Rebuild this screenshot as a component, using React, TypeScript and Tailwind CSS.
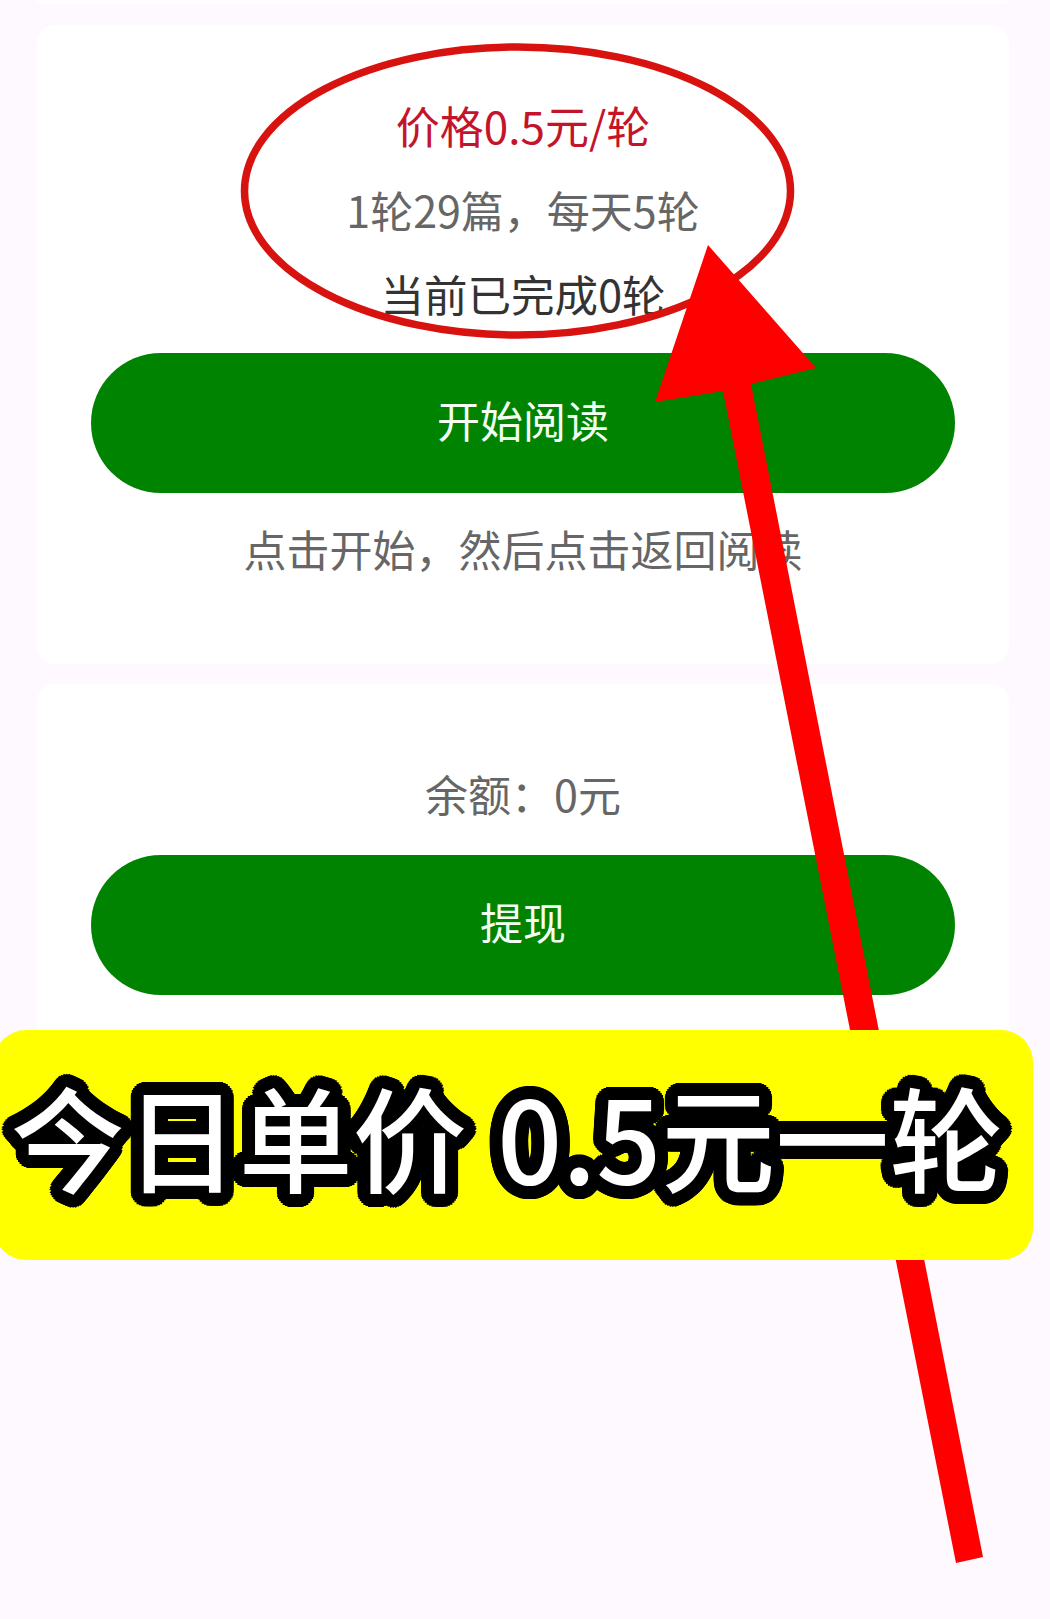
export default function App() {
  const font = 'font-["Noto_Sans_CJK_SC",sans-serif]';
  return (
    <div className={`relative w-[1050px] h-[1619px] overflow-hidden bg-[#fdf9fe] ${font}`}>
      <div className="mx-[37px] w-[972px] h-[4px] rounded-b-[18px] bg-[#fffdff]" />
      <section className="mt-[21px] mx-[37px] w-[972px] h-[639px] rounded-[18px] bg-white flex flex-col items-center pt-[58px]">
        <p className="text-[44px] leading-[84px] text-[#c4142a]">价格0.5元/轮</p>
        <p className="text-[43px] leading-[84px] text-[#666666]">1轮29篇，每天5轮</p>
        <p className="mt-[1px] text-[43.5px] leading-[83px] text-[#333333]">当前已完成0轮</p>
        <button className="mt-[18px] w-[864px] h-[140px] rounded-[70px] bg-[#008300] pb-[8px] text-[43px] text-[#f2fff2]">开始阅读</button>
        <p className="mt-[13px] text-[43px] leading-[84px] text-[#666666]">点击开始，然后点击返回阅读</p>
      </section>
      <section className="mt-[20px] mx-[37px] w-[972px] h-[480px] rounded-[18px] bg-white flex flex-col items-center pt-[67px]">
        <p className="text-[43px] leading-[84px] text-[#666666]">余额：0元</p>
        <button className="mt-[20px] w-[864px] h-[140px] rounded-[70px] bg-[#008300] pb-[8px] text-[43px] text-[#f2fff2]">提现</button>
      </section>

      <svg className="absolute left-0 top-0" width="1050" height="1619" viewBox="0 0 1050 1619" fill="none">
        <ellipse cx="517.5" cy="191" rx="273" ry="144" stroke="#d8120f" strokeWidth="7.5" />
        <polygon
          fill="#ff0000"
          points="708,245 816,368 751,384 983,1557 956,1563 723,391 655,402"
        />
      </svg>

      <div className="absolute left-[-6px] top-[1030px] w-[1039px] h-[230px] rounded-[32px] bg-[#ffff00] flex items-center justify-center pb-[20px] pr-[13px]">
        <span className="text-[114px] leading-none font-medium whitespace-nowrap text-white [word-spacing:5px] [text-shadow:13px_0_0_#000,12.7px_2.5px_0_#000,12px_5px_0_#000,10.8px_7.2px_0_#000,9.2px_9.2px_0_#000,7.2px_10.8px_0_#000,5px_12px_0_#000,2.5px_12.7px_0_#000,0_13px_0_#000,-2.5px_12.7px_0_#000,-5px_12px_0_#000,-7.2px_10.8px_0_#000,-9.2px_9.2px_0_#000,-10.8px_7.2px_0_#000,-12px_5px_0_#000,-12.7px_2.5px_0_#000,-13px_0_0_#000,-12.7px_-2.5px_0_#000,-12px_-5px_0_#000,-10.8px_-7.2px_0_#000,-9.2px_-9.2px_0_#000,-7.2px_-10.8px_0_#000,-5px_-12px_0_#000,-2.5px_-12.7px_0_#000,0_-13px_0_#000,2.5px_-12.7px_0_#000,5px_-12px_0_#000,7.2px_-10.8px_0_#000,9.2px_-9.2px_0_#000,10.8px_-7.2px_0_#000,12px_-5px_0_#000,12.7px_-2.5px_0_#000,6.5px_0_0_#000,4.6px_4.6px_0_#000,0_6.5px_0_#000,-4.6px_4.6px_0_#000,-6.5px_0_0_#000,-4.6px_-4.6px_0_#000,0_-6.5px_0_#000,4.6px_-4.6px_0_#000]">
          今日单价 0.5元一轮
        </span>
      </div>
    </div>
  );
}
